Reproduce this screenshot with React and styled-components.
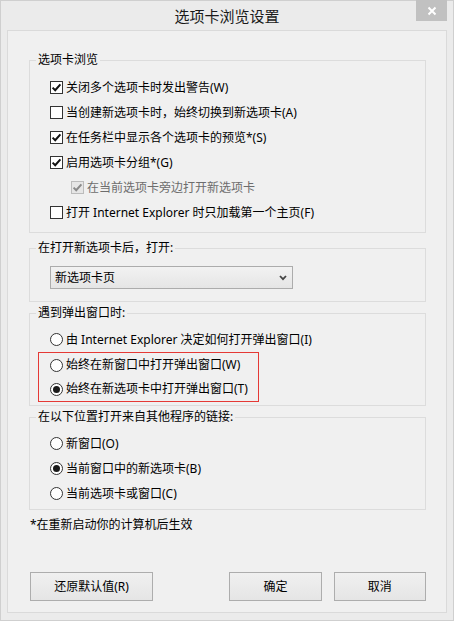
import React from 'react';
import styled, { createGlobalStyle } from 'styled-components';

const GlobalStyle = createGlobalStyle`
  html, body {
    margin: 0;
    padding: 0;
    background: #ffffff;
  }
  * { box-sizing: border-box; }
`;

const FONT = `"Noto Sans", "Noto Sans CJK SC", sans-serif`;

const Window = styled.div`
  width: 454px;
  height: 621px;
  display: flex;
  flex-direction: column;
  background: #ebebeb;
  border: 1px solid #cfcfcf;
  font-family: ${FONT};
  font-size: 12px;
  color: #000;
`;

const TitleBar = styled.div`
  position: relative;
  height: 29px;
  display: flex;
  align-items: center;
  justify-content: center;
  flex-shrink: 0;
`;

const Title = styled.div`
  font-size: 15px;
  color: #1a1a1a;
  line-height: 20px;
`;

const CloseButton = styled.div`
  position: absolute;
  top: -1px;
  right: 6px;
  width: 31px;
  height: 21px;
  background: #c1c1c1;
  display: flex;
  align-items: center;
  justify-content: center;
`;

const Panel = styled.div`
  flex: 1;
  margin: 0 6px 7px 6px;
  background: #f0f0f0;
  border: 1px solid #dadada;
  padding: 22px 20px 11px 21px;
  display: flex;
  flex-direction: column;
`;

const Group = styled.fieldset`
  margin: ${({ $top }) => $top || 0}px 0 0 0;
  padding: ${({ $pt }) => $pt}px 0 ${({ $pb }) => $pb}px 20px;
  border: 1px solid #dcdcdc;
  min-width: 0;
`;

const Legend = styled.legend`
  margin-left: -14px;
  padding: 0 2px;
  line-height: 14px;
  font-size: 12px;
  color: #000;
`;

const Row = styled.div`
  display: flex;
  align-items: center;
  gap: 3px;
  height: ${({ $h }) => $h || 25}px;
  padding-left: ${({ $indent }) => ($indent ? 21 : 0)}px;
  color: ${({ $disabled }) => ($disabled ? '#6d6d6d' : '#000')};
  white-space: nowrap;
  line-height: 16px;
`;

const Box = styled.span`
  width: 13px;
  height: 13px;
  flex-shrink: 0;
  border: 1px solid ${({ $disabled }) => ($disabled ? '#bcbcbc' : '#333333')};
  background: ${({ $disabled }) => ($disabled ? '#e6e6e6' : '#ffffff')};
  display: flex;
  align-items: center;
  justify-content: center;
`;

const Radio = styled.span`
  width: 13px;
  height: 13px;
  flex-shrink: 0;
  border-radius: 50%;
  border: 1px solid #333333;
  background: #ffffff;
  display: flex;
  align-items: center;
  justify-content: center;

  &::after {
    content: '';
    width: 7px;
    height: 7px;
    border-radius: 50%;
    background: ${({ $checked }) => ($checked ? '#1a1a1a' : 'transparent')};
  }
`;

const Highlight = styled.div`
  margin-left: -12px;
  padding-left: 11px;
  width: 221px;
  border: 1px solid #e53935;
`;

const Select = styled.div`
  margin-top: 11px;
  width: 243px;
  height: 23px;
  border: 1px solid #acacac;
  background: linear-gradient(#f2f2f2, #e5e5e5);
  display: flex;
  align-items: center;
  justify-content: space-between;
  padding: 0 5px 0 4px;
  line-height: 16px;
`;

const Note = styled.div`
  margin-top: 8px;
  margin-left: 1px;
  line-height: 14px;
`;

const ButtonBar = styled.div`
  margin-top: auto;
  display: flex;
  align-items: center;
  padding-left: 1px;
`;

const Button = styled.div`
  width: ${({ $w }) => $w}px;
  height: 29px;
  margin-left: ${({ $ml }) => $ml || 0}px;
  border: 1px solid #adadad;
  background: linear-gradient(#f0f0f0, #e5e5e5);
  display: flex;
  align-items: center;
  justify-content: center;
  line-height: 16px;
`;

const Check = ({ checked, disabled }) => (
  <Box $disabled={disabled}>
    {checked && (
      <svg width="11" height="11" viewBox="0 0 11 11">
        <path
          d="M1.6 5.6 L4.2 8.2 L9.4 2.4"
          fill="none"
          stroke={disabled ? '#8a8a8a' : '#111'}
          strokeWidth="2"
        />
      </svg>
    )}
  </Box>
);

const CheckRow = ({ checked, disabled, indent, children }) => (
  <Row $disabled={disabled} $indent={indent}>
    <Check checked={checked} disabled={disabled} />
    <span>{children}</span>
  </Row>
);

const RadioRow = ({ checked, h, children }) => (
  <Row $h={h}>
    <Radio $checked={checked} />
    <span>{children}</span>
  </Row>
);

export default function App() {
  return (
    <>
      <GlobalStyle />
      <Window>
        <TitleBar>
          <Title>选项卡浏览设置</Title>
          <CloseButton>
            <svg width="10" height="10" viewBox="0 0 10 10">
              <path d="M1.5 1.5 L8.5 8.5 M8.5 1.5 L1.5 8.5" stroke="#fff" strokeWidth="2" />
            </svg>
          </CloseButton>
        </TitleBar>
        <Panel>
          <Group $pt={8} $pb={7}>
            <Legend>选项卡浏览</Legend>
            <CheckRow checked>关闭多个选项卡时发出警告(W)</CheckRow>
            <CheckRow>当创建新选项卡时，始终切换到新选项卡(A)</CheckRow>
            <CheckRow checked>在任务栏中显示各个选项卡的预览*(S)</CheckRow>
            <CheckRow checked>启用选项卡分组*(G)</CheckRow>
            <CheckRow checked disabled indent>在当前选项卡旁边打开新选项卡</CheckRow>
            <CheckRow>打开 Internet Explorer 时只加载第一个主页(F)</CheckRow>
          </Group>

          <Group $top={8} $pt={0} $pb={12}>
            <Legend>在打开新选项卡后，打开:</Legend>
            <Select>
              <span>新选项卡页</span>
              <svg width="8" height="6" viewBox="0 0 8 6">
                <path d="M1 1 L4 4.2 L7 1" fill="none" stroke="#444" strokeWidth="1.8" />
              </svg>
            </Select>
          </Group>

          <Group $top={4} $pt={7} $pb={3}>
            <Legend>遇到弹出窗口时:</Legend>
            <RadioRow>由 Internet Explorer 决定如何打开弹出窗口(I)</RadioRow>
            <Highlight>
              <RadioRow h={24}>始终在新窗口中打开弹出窗口(W)</RadioRow>
              <RadioRow h={24} checked>始终在新选项卡中打开弹出窗口(T)</RadioRow>
            </Highlight>
          </Group>

          <Group $top={4} $pt={7} $pb={3}>
            <Legend>在以下位置打开来自其他程序的链接:</Legend>
            <RadioRow>新窗口(O)</RadioRow>
            <RadioRow checked>当前窗口中的新选项卡(B)</RadioRow>
            <RadioRow>当前选项卡或窗口(C)</RadioRow>
          </Group>

          <Note>*在重新启动你的计算机后生效</Note>

          <ButtonBar>
            <Button $w={124}>还原默认值(R)</Button>
            <Button $w={93} $ml={76}>确定</Button>
            <Button $w={93} $ml={12}>取消</Button>
          </ButtonBar>
        </Panel>
      </Window>
    </>
  );
}
